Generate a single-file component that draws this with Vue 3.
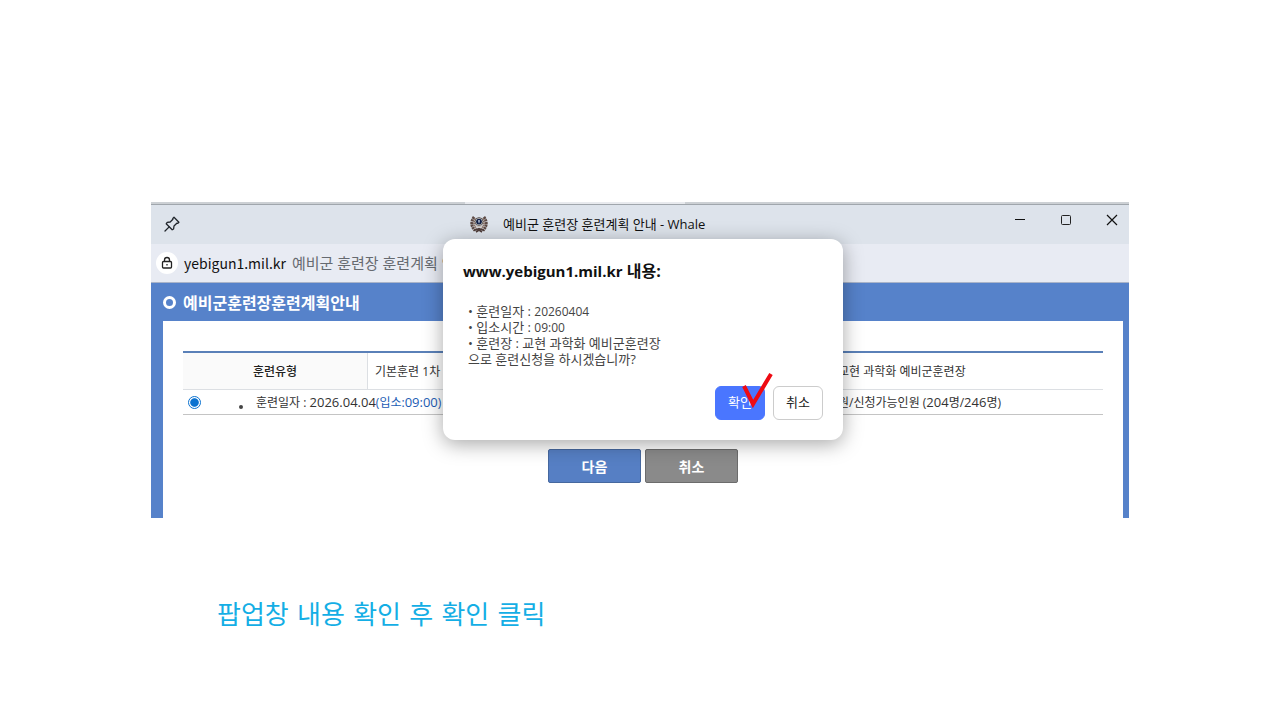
<script setup>
import { ref } from 'vue'

const selected = ref('0404')
</script>

<template>
  <main class="slide">
    <section class="window">
      <div class="behind"><span></span></div>
      <header class="titlebar">
        <button class="icon-btn" aria-label="고정">
          <svg width="18" height="18" viewBox="0 0 18 18" fill="none" stroke="#20252b" stroke-width="1.3" stroke-linejoin="round" stroke-linecap="round">
            <path d="M11 2.3 15.9 7.2 14.6 8.4 13.8 8.2 11 11 10.6 14 9.2 14.8 3.2 8.8 4.2 7.4 7.2 7 9.9 4.3 9.8 3.4Z" />
            <path d="M6.2 11.9 2 16" />
          </svg>
        </button>
        <div class="win-title">
          <svg width="18" height="18" viewBox="0 0 18 18" fill="none">
            <path d="M4.2 2Q-1 9 5 15.500M13.800 2Q19 9 13 15.500" stroke="#5c4a45" stroke-width="3" stroke-dasharray="2.200 .5" />
            <path d="M5.400 3.500Q2.200 9 6.500 14M12.600 3.500Q15.800 9 11.500 14" stroke="#8d766c" stroke-width="2" stroke-dasharray="1.600 .5" />
            <path d="M4 15.500 9 13.500 14 15.500M6 17 9 15 12 17" stroke="#4f3d3a" stroke-width="1.600" />
            <circle cx="9" cy="6.600" r="4" fill="#d9dad9" stroke="#5e5957" />
            <circle cx="9" cy="6.600" r="2.900" fill="#101f45" />
            <path d="M9 5v3.200M8 6h2" stroke="#c9d4e8" stroke-width=".9" />
            <path d="M6.500 11.500h5" stroke="#cbbfb6" stroke-width="1.500" />
          </svg>
          <span>예비군 훈련장 훈련계획 안내 - Whale</span>
        </div>
        <div class="win-controls">
          <button class="icon-btn" aria-label="최소화">
            <svg width="12" height="12" viewBox="0 0 12 12" stroke="#111"><path d="M1 5.500h10" /></svg>
          </button>
          <button class="icon-btn" aria-label="최대화">
            <svg width="12" height="12" viewBox="0 0 12 12" fill="none" stroke="#222"><rect x="1.500" y="1.500" width="9" height="9" rx="1" /></svg>
          </button>
          <button class="icon-btn" aria-label="닫기">
            <svg width="12" height="12" viewBox="0 0 12 12" stroke="#111" stroke-width="1.200"><path d="M1 1 11 11M11 1 1 11" /></svg>
          </button>
        </div>
      </header>
      <div class="addressbar">
        <span class="lock">
          <svg width="12" height="14" viewBox="0 0 12 14" fill="none" stroke="#222" stroke-width="1.300">
            <rect x="1.500" y="5.500" width="9" height="6.500" rx="1" />
            <path d="M3.500 5.500V4a2.500 2.500 0 0 1 5 0v1.500M6 8v1.600" />
          </svg>
        </span>
        <span class="host">yebigun1.mil.kr</span>
        <span class="page-name">예비군 훈련장 훈련계획 안내</span>
      </div>
      <div class="page">
        <h1><i class="ring"></i>예비군훈련장훈련계획안내</h1>
        <div class="content">
          <table>
            <colgroup><col class="c-type"><col><col class="c-place"></colgroup>
            <tbody>
              <tr class="head">
                <th scope="row">훈련유형</th>
                <td class="kind">기본훈련 1차</td>
                <td>교현 과학화 예비군훈련장</td>
              </tr>
              <tr class="option">
                <td colspan="2">
                  <label>
                    <input v-model="selected" type="radio" name="plan" value="0404">
                    <i class="dot"></i>
                    <span>훈련일자 : <span class="num">2026.04.04</span><span class="entry">(입소:<span class="num">09:00</span>)</span></span>
                  </label>
                </td>
                <td>원/신청가능인원 (<span class="num">204</span>명/<span class="num">246</span>명)</td>
              </tr>
            </tbody>
          </table>
          <div class="actions">
            <button class="next">다음</button>
            <button class="cancel">취소</button>
          </div>
        </div>
      </div>

      <div class="dialog" role="dialog" aria-labelledby="dlg-title">
        <h2 id="dlg-title"><span class="site">www.yebigun1.mil.kr</span> 내용:</h2>
        <div class="message">
          <p>• 훈련일자 : <span class="small">20260404</span></p>
          <p>• 입소시간 : <span class="small">09:00</span></p>
          <p>• 훈련장 : 교현 과학화 예비군훈련장</p>
          <p>으로 훈련신청을 하시겠습니까?</p>
        </div>
        <div class="dialog-actions">
          <button class="ok">확인</button>
          <button class="no">취소</button>
        </div>
        <svg class="check" width="32" height="38" viewBox="0 0 32 38" fill="none" stroke="#ee0a12" stroke-width="4">
          <path d="M2 14 11 32 29 2" />
        </svg>
      </div>
    </section>
    <p class="caption">팝업창 내용 확인 후 확인 클릭</p>
  </main>
</template>

<style>
body {
  margin: 0;
  background: #fff;
}
</style>

<style scoped>
.slide {
  padding: 202px 151px 0;
  font-family: "Open Sans", "Noto Sans CJK KR", sans-serif;
  font-size: 12px;
  color: #333;
}
button {
  font-family: inherit;
  padding: 0;
  margin: 0;
}
h1, h2, p {
  margin: 0;
}
.window {
  position: relative;
}
.behind {
  height: 2px;
  background: #ccd0d4;
  border-bottom: 1px solid #a0a6ac;
}
.behind span {
  display: block;
  height: 2px;
  width: 220px;
  margin-left: 314px;
  background: #e8eaee;
}
.titlebar {
  display: grid;
  grid-template-columns: 319px 1fr auto;
  box-sizing: border-box;
  height: 39px;
  padding-bottom: 2px;
  background: #dde3eb;
  align-items: center;
}
.icon-btn {
  display: flex;
  border: 0;
  background: none;
}
.titlebar > .icon-btn {
  padding-left: 12px;
}
.win-title {
  display: flex;
  align-items: center;
  gap: 15px;
  font-size: 13px;
  color: #111;
  white-space: nowrap;
}
.win-controls {
  display: flex;
  gap: 34px;
  padding: 0 11px 8px 0;
}
.addressbar {
  display: flex;
  align-items: center;
  height: 38px;
  padding-left: 5px;
  background: #e8ebf3;
  border-bottom: 1px solid #a9b4c9;
  font-size: 15px;
  line-height: 18px;
  white-space: nowrap;
}
.lock {
  display: flex;
  align-items: center;
  justify-content: center;
  width: 22px;
  height: 22px;
  border-radius: 50%;
  background: #fff;
}
.host {
  margin: 0 6px;
  font-family: "Noto Sans CJK KR", sans-serif;
  font-size: 14px;
  color: #111;
}
.page-name {
  color: #666a70;
}
.page {
  background: #5682ca;
  padding: 0 6px 0 12px;
}
h1 {
  display: flex;
  align-items: center;
  gap: 7px;
  height: 38px;
  font-size: 16px;
  color: #fff;
}
.ring {
  box-sizing: border-box;
  width: 13px;
  height: 13px;
  border: 3px solid #fff;
  border-radius: 50%;
}
.content {
  background: #fff;
  padding: 30px 20px 35px;
}
table {
  width: 100%;
  table-layout: fixed;
  border-collapse: separate;
  border-spacing: 0;
  border-top: 2px solid #5a80b8;
  white-space: nowrap;
}
.c-type {
  width: 185px;
}
.c-place {
  width: 275px;
}
th, td {
  padding: 0 7px;
  text-align: left;
}
.head > * {
  height: 36px;
  border-bottom: 1px solid #dcdfe3;
}
th {
  text-align: center;
  font-weight: 500;
  color: #222;
  background: #fafafa;
  border-right: 1px solid #dcdfe3;
}
.option > td {
  height: 24px;
  border-bottom: 1px solid #c4c4c4;
}
td:last-child {
  padding-left: 10px;
}
label {
  display: flex;
  align-items: center;
}
input {
  appearance: none;
  box-sizing: border-box;
  width: 13px;
  height: 13px;
  margin: 0 38px 0 -2px;
  border: 1px solid #0b72d0;
  border-radius: 50%;
  background: #fff;
}
input:checked {
  background: radial-gradient(circle closest-side, #0b72d0 70%, #fff 85%);
}
.dot {
  width: 4px;
  height: 4px;
  margin: 10px 13px 0 0;
  border-radius: 50%;
  background: #444;
}
.num {
  font-size: 13px;
  line-height: 16px;
}
.entry {
  color: #1c5cb4;
}
.actions {
  display: flex;
  justify-content: center;
  gap: 4px;
  margin-top: 34px;
}
.actions button {
  width: 93px;
  height: 34px;
  border: 1px solid #46689f;
  border-radius: 2px;
  font-size: 14px;
  font-weight: 700;
  color: #fff;
  background: #567fc4;
}
.actions .cancel {
  border-color: #6c6c6c;
  background: #8a8a8a;
}
.dialog {
  position: absolute;
  top: 37px;
  left: calc(50% - 197px);
  box-sizing: border-box;
  width: 400px;
  padding: 20px;
  border-radius: 12px;
  background: #fff;
  box-shadow: 0 4px 20px rgba(0, 0, 0, .35);
}
h2 {
  font-size: 16px;
  line-height: 24px;
  font-weight: 700;
  color: #111;
}
.site {
  font-size: 15px;
}
.message {
  padding: 20px 5px 0;
  font-size: 13px;
  line-height: 16px;
  color: #444;
}
.message p {
  height: 16px;
}
.small {
  font-size: 12px;
}
.dialog-actions {
  display: flex;
  justify-content: flex-end;
  gap: 8px;
  margin-top: 19px;
}
.dialog-actions button {
  width: 50px;
  height: 34px;
  padding-bottom: 3px;
  border: 1px solid #ccc;
  border-radius: 6px;
  background: #fff;
  font-size: 13px;
  color: #222;
}
.dialog-actions .ok {
  border-color: #4a76ff;
  background: #4a76ff;
  color: #fff;
}
.check {
  position: absolute;
  right: 69px;
  bottom: 30px;
}
.caption {
  margin: 78px 0 0 66px;
  font-family: "DejaVu Sans", "Noto Sans CJK KR", sans-serif;
  font-size: 26px;
  line-height: 38px;
  color: #14aee5;
}
</style>
